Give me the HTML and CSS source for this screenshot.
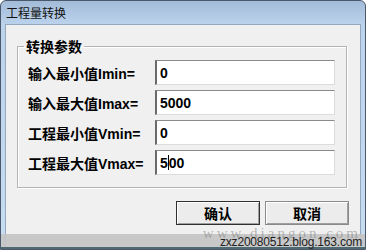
FILE: index.html
```html
<!DOCTYPE html>
<html lang="zh">
<head>
    <meta charset="UTF-8">
    <title>工程量转换</title>
    <link rel="stylesheet" href="styles.css">
</head>
<body>
    <div class="window">
        <div class="titlebar">工程量转换</div>
        <div class="frame">
            <div class="client">
                <fieldset class="group">
                    <legend>转换参数</legend>
                    <div class="rows">
                        <div class="row"><label>输入最小值Imin=</label><div class="field">0</div></div>
                        <div class="row"><label>输入最大值Imax=</label><div class="field">5000</div></div>
                        <div class="row"><label>工程最小值Vmin=</label><div class="field">0</div></div>
                        <div class="row"><label>工程最大值Vmax=</label><div class="field">5<span class="caret"></span>00</div></div>
                    </div>
                </fieldset>
                <div class="buttons">
                    <button class="btn default">确认</button>
                    <button class="btn">取消</button>
                </div>
            </div>
        </div>
        <!-- photo watermark strip -->
        <div class="watermark">
            <span class="wm-site">www.diangon.com</span>
            <span class="wm-blog">zxz20080512.blog.163.com</span>
        </div>
    </div>
</body>
</html>
```

FILE: styles.css
```css
body {
    margin: 0;
    background: #fff;
    font-family: "Liberation Sans", "Noto Sans CJK SC", sans-serif;
}
.window {
    position: relative;
    width: 366px;
    height: 250px;
    box-sizing: border-box;
    border: 1px solid #4a5a6c;
    border-radius: 6px 6px 0 0;
    background: linear-gradient(#a2bbd8, #bcd3ec 24px, #c8dcf1);
    display: flex;
    flex-direction: column;
    overflow: hidden;
}
.titlebar {
    height: 23px;
    padding-left: 5px;
    line-height: 24px;
    font-size: 12px;
    font-family: "Noto Sans CJK SC", sans-serif;
    color: #111;
}
.frame {
    flex: 1;
    display: flex;
    padding: 0 4px;
}
.client {
    flex: 1;
    background: #f0f0f0;
    border: 1px solid #95a8bd;
    border-bottom: none;
}
.group {
    margin: 13px 13px 0 11px;
    padding: 6px 11px 12px 10px;
    border: 1px solid #b4b4b4;
    box-shadow: inset 1px 1px 0 #fff, 1px 1px 0 #fff;
}
.group legend {
    margin-left: -4px;
    padding: 0 2px;
    font-size: 14px;
    line-height: 16px;
    font-weight: bold;
    font-family: "Noto Sans CJK SC", sans-serif;
}
.rows {
    display: grid;
    row-gap: 5px;
}
.row {
    display: flex;
    align-items: center;
    height: 25px;
}
.row label {
    width: 127px;
    font-size: 14px;
    font-weight: bold;
    color: #000;
}
.field {
    width: 180px;
    height: 25px;
    box-sizing: border-box;
    padding-left: 3px;
    background: #fff;
    border-style: solid;
    border-width: 1px 1px 1px 2px;
    border-color: #8a8a8a #dcdcdc #dcdcdc #6a6a6a;
    font-size: 14px;
    font-weight: bold;
    line-height: 22px;
    display: flex;
    align-items: center;
}
.caret {
    display: inline-block;
    width: 1px;
    height: 15px;
    background: #000;
}
.buttons {
    display: flex;
    justify-content: flex-end;
    gap: 5px;
    margin: 13px 11px 0 0;
}
.btn {
    width: 84px;
    height: 24px;
    padding: 0;
    border: 1px solid #8a8a8a;
    background: #ececec;
    box-shadow: inset 1px 1px 0 #fff, inset -1px -1px 0 #a0a0a0;
    font-size: 14px;
    font-weight: bold;
    font-family: "Noto Sans CJK SC", sans-serif;
    color: #000;
}
.btn.default {
    border-color: #303030;
}
.watermark {
    position: absolute;
    left: 0;
    right: 0;
    bottom: 0;
    height: 13px;
    background: rgba(196, 196, 196, 0.92);
    border-bottom: 2px solid #4c6a70;
}
.wm-site {
    position: absolute;
    right: 4px;
    bottom: 5px;
    font-family: "Liberation Serif", serif;
    font-size: 15px;
    letter-spacing: 3px;
    color: rgba(110, 110, 110, 0.45);
}
.wm-blog {
    position: absolute;
    right: 3px;
    bottom: -2px;
    font-size: 12px;
    letter-spacing: -0.2px;
    color: #222;
}
```
